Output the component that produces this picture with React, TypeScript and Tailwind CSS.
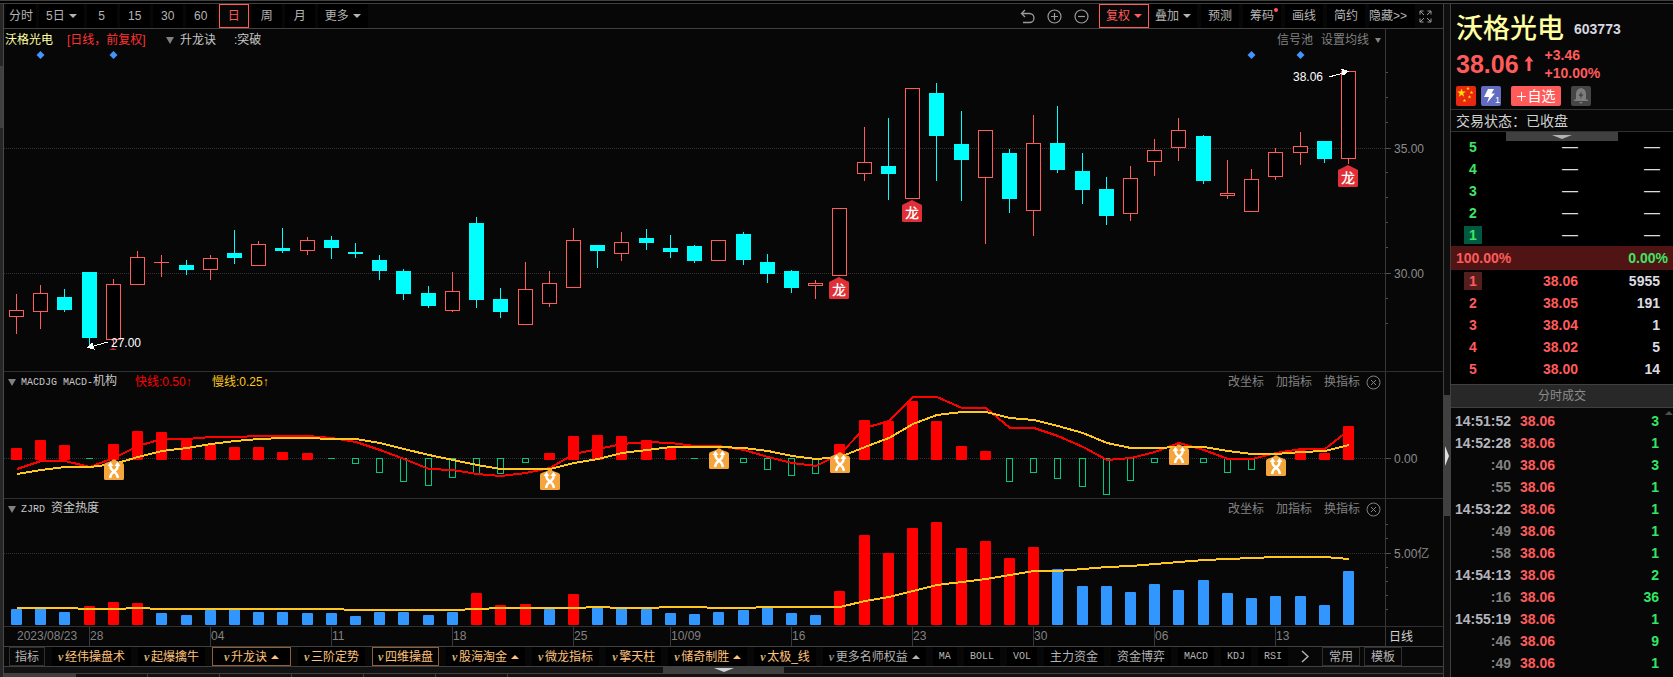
import { type ReactNode } from "react";
import clsx from "clsx";

/* ----------------------------------------------------------------
   Types
---------------------------------------------------------------- */
// [up, high, top, bottom, low]
type Candle = [number, number, number, number, number];

type Level = { level: number; price: string; volume: string };
type Tick = { time: string; price: string; volume: number };

type Tab = {
  label: string;
  master?: boolean;
  muted?: boolean;
  boxed?: boolean;
  arrow?: boolean;
};

/* ----------------------------------------------------------------
   Chart data
---------------------------------------------------------------- */
const candles: Candle[] = [
  [1, 294, 310, 317, 334],
  [1, 285, 293, 312, 329],
  [0, 289, 297, 310, 312],
  [0, 272, 272, 338, 348],
  [1, 279, 284, 340, 347],
  [1, 251, 257, 285, 285],
  [1, 255, 262, 263, 277],
  [0, 260, 265, 270, 275],
  [1, 255, 258, 270, 280],
  [0, 230, 253, 258, 264],
  [1, 241, 244, 266, 266],
  [0, 228, 248, 251, 253],
  [1, 237, 240, 251, 255],
  [0, 236, 240, 248, 259],
  [0, 243, 252, 254, 258],
  [0, 255, 260, 271, 280],
  [0, 269, 271, 294, 300],
  [0, 286, 293, 306, 308],
  [1, 272, 291, 311, 312],
  [0, 217, 223, 300, 308],
  [0, 288, 299, 312, 318],
  [1, 262, 289, 325, 325],
  [1, 271, 283, 304, 307],
  [1, 228, 240, 288, 288],
  [0, 245, 245, 251, 268],
  [1, 232, 242, 254, 261],
  [0, 229, 238, 243, 250],
  [0, 235, 248, 252, 258],
  [0, 245, 246, 261, 263],
  [1, 240, 240, 261, 261],
  [0, 232, 234, 260, 265],
  [0, 254, 262, 274, 283],
  [0, 270, 271, 288, 293],
  [1, 280, 283, 286, 299],
  [1, 208, 208, 276, 276],
  [1, 127, 162, 174, 181],
  [0, 118, 166, 174, 200],
  [1, 88, 88, 199, 199],
  [0, 83, 93, 136, 181],
  [0, 111, 144, 160, 201],
  [1, 130, 130, 178, 244],
  [0, 149, 153, 199, 213],
  [1, 115, 143, 211, 236],
  [0, 106, 143, 170, 173],
  [0, 153, 171, 190, 204],
  [0, 177, 189, 216, 225],
  [1, 166, 178, 214, 221],
  [1, 139, 150, 162, 176],
  [1, 118, 130, 148, 161],
  [0, 135, 136, 181, 184],
  [1, 160, 193, 196, 199],
  [1, 169, 179, 212, 212],
  [1, 148, 152, 177, 180],
  [1, 132, 146, 153, 165],
  [0, 141, 141, 159, 163],
  [1, 71, 71, 159, 164],
];

// bar end; values under the zero line (458) are drawn as hollow green bars
const macdBars = [
  448, 440, 445, 459, 444, 431, 432, 440, 444, 447, 447, 452, 453, 459, 464,
  473, 482, 486, 478, 474, 474, 463, 453, 436, 435, 436, 440, 448, 459, 0, 463,
  470, 476, 474, 444, 420, 421, 401, 421, 446, 451, 482, 473, 479, 487, 495,
  481, 463, 0, 463, 473, 470, 0, 450, 453, 426,
];

const fastLine = [
  469, 461, 461, 467, 458, 446, 439, 439, 437, 437, 436, 436, 436, 438, 442,
  450, 459, 469, 470, 474, 476, 473, 468, 454, 449, 444, 442, 443, 446, 446,
  450, 457, 463, 466, 454, 428, 421, 397, 397, 408, 408, 428, 428, 436, 447,
  460, 458, 452, 443, 450, 459, 459, 453, 449, 449, 430,
];

const slowLine = [
  474, 470, 467, 467, 464, 457, 451, 448, 444, 441, 439, 438, 438, 439, 439,
  443, 449, 455, 460, 465, 469, 469, 469, 463, 459, 453, 450, 447, 447, 447,
  448, 451, 456, 459, 457, 447, 438, 424, 415, 412, 412, 418, 420, 426, 433,
  443, 448, 448, 447, 447, 451, 454, 454, 452, 451, 445,
];

const heatBars = [
  609, 608, 612, 606, 602, 603, 613, 615, 610, 609, 612, 612, 613, 613, 616,
  612, 612, 615, 612, 593, 605, 604, 609, 594, 606, 608, 609, 613, 614, 612,
  610, 607, 613, 615, 591, 535, 553, 528, 522, 548, 541, 558, 547, 569, 586,
  586, 592, 584, 590, 580, 593, 598, 596, 596, 605, 571,
];

const hotDays = [3, 4, 5, 19, 20, 21, 23, 34, 35, 36, 37, 38, 39, 40, 41, 42];

const heatLine = [
  608, 608, 608, 609, 609, 608, 609, 609, 609, 609, 609, 609, 609, 609, 610,
  610, 610, 610, 610, 609, 608, 608, 608, 608, 607, 608, 608, 607, 607, 608,
  608, 607, 607, 607, 607, 601, 597, 591, 585, 582, 579, 575, 571, 571, 569,
  567, 566, 564, 562, 560, 559, 558, 557, 557, 557, 559,
];

const dragonMarks = [
  { day: 34, y: 277 },
  { day: 37, y: 200 },
  { day: 55, y: 165 },
];

const crossMarks = [
  { day: 4, y: 459 },
  { day: 22, y: 469 },
  { day: 29, y: 448 },
  { day: 34, y: 452 },
  { day: 48, y: 444 },
  { day: 52, y: 455 },
];

const dates = [
  { day: 3, label: "28" },
  { day: 8, label: "04" },
  { day: 13, label: "11" },
  { day: 18, label: "18" },
  { day: 23, label: "25" },
  { day: 27, label: "10/09" },
  { day: 32, label: "16" },
  { day: 37, label: "23" },
  { day: 42, label: "30" },
  { day: 47, label: "06" },
  { day: 52, label: "13" },
];

/* ----------------------------------------------------------------
   Quote data
---------------------------------------------------------------- */
const asks = [5, 4, 3, 2, 1];

const bids: Level[] = [
  { level: 1, price: "38.06", volume: "5955" },
  { level: 2, price: "38.05", volume: "191" },
  { level: 3, price: "38.04", volume: "1" },
  { level: 4, price: "38.02", volume: "5" },
  { level: 5, price: "38.00", volume: "14" },
];

const ticks: Tick[] = [
  { time: "14:51:52", price: "38.06", volume: 3 },
  { time: "14:52:28", price: "38.06", volume: 1 },
  { time: ":40", price: "38.06", volume: 3 },
  { time: ":55", price: "38.06", volume: 1 },
  { time: "14:53:22", price: "38.06", volume: 1 },
  { time: ":49", price: "38.06", volume: 1 },
  { time: ":58", price: "38.06", volume: 1 },
  { time: "14:54:13", price: "38.06", volume: 2 },
  { time: ":16", price: "38.06", volume: 36 },
  { time: "14:55:19", price: "38.06", volume: 1 },
  { time: ":46", price: "38.06", volume: 9 },
  { time: ":49", price: "38.06", volume: 1 },
];

const tabs: Tab[] = [
  { label: "经伟操盘术", master: true },
  { label: "起爆擒牛", master: true },
  { label: "升龙诀", master: true, boxed: true, arrow: true },
  { label: "三阶定势", master: true },
  { label: "四维操盘", master: true, boxed: true },
  { label: "股海淘金", master: true, arrow: true },
  { label: "微龙指标", master: true },
  { label: "擎天柱", master: true },
  { label: "储奇制胜", master: true, arrow: true },
  { label: "太极_线", master: true },
  { label: "更多名师权益", master: true, muted: true, arrow: true },
  { label: "MA" },
  { label: "BOLL" },
  { label: "VOL" },
  { label: "主力资金" },
  { label: "资金博弈" },
  { label: "MACD" },
  { label: "KDJ" },
  { label: "RSI" },
];

/* ----------------------------------------------------------------
   Helpers
---------------------------------------------------------------- */
const left = (day: number) => Math.round(9 + day * 24.218);
const center = (day: number) => left(day) + 7;
const toPoints = (ys: number[]) =>
  ys.map((y, day) => `${center(day) + 1},${y}`).join(" ");

function Caret({ up, className }: { up?: boolean; className?: string }) {
  return (
    <svg viewBox="0 0 8 4" className={clsx("h-1 w-2 shrink-0", className)} fill="currentColor">
      <path d={up ? "M4 0L8 4H0Z" : "M0 0H8L4 4Z"} />
    </svg>
  );
}

function Fold() {
  return (
    <svg viewBox="0 0 8 7" className="h-[7px] w-2 shrink-0 text-[#808080]" fill="currentColor">
      <path d="M0 0H8L4 7Z" />
    </svg>
  );
}

/* ----------------------------------------------------------------
   Toolbar
---------------------------------------------------------------- */
function Period({ children, active, wide }: { children: ReactNode; active?: boolean; wide?: boolean }) {
  return (
    <button
      className={clsx(
        "flex h-6 items-center justify-center gap-1",
        wide ? "px-[7px]" : "w-[30px]",
        active ? "border border-[#ff5b5b] text-[#ff5b5b]" : "bg-black"
      )}
    >
      {children}
    </button>
  );
}

function Tool({ children }: { children: ReactNode }) {
  return (
    <button className="relative flex h-6 items-center gap-1 bg-black px-[7px]">
      {children}
    </button>
  );
}

function Toolbar() {
  return (
    <header className="flex h-[25px] items-center justify-between border-b border-[#404040] pr-[11px] pl-[2px] text-[#b4b4b4]">
      <nav className="flex items-center gap-[3px]">
        <Period>分时</Period>
        <Period wide>
          5日
          <Caret />
        </Period>
        <Period>5</Period>
        <Period>15</Period>
        <Period>30</Period>
        <Period>60</Period>
        <Period active>日</Period>
        <Period>周</Period>
        <Period>月</Period>
        <Period wide>
          更多
          <Caret />
        </Period>
      </nav>

      <div className="flex items-center gap-1">
        <div className="mr-1.5 flex items-center gap-3 text-[#9a9a9a]">
          <button aria-label="撤销">
            <svg viewBox="0 0 15 15" className="size-[15px]" fill="none" stroke="currentColor" strokeWidth="1.3">
              <path d="M5 1L1.5 4.5L5 8M1.5 4.5H9.5A4.5 4.5 0 0 1 9.5 13.5H3" />
            </svg>
          </button>
          <button aria-label="放大">
            <svg viewBox="0 0 15 15" className="size-[15px]" fill="none" stroke="currentColor" strokeWidth="1.2">
              <circle cx="7.5" cy="7.5" r="6.5" />
              <path d="M4 7.5H11M7.5 4V11" />
            </svg>
          </button>
          <button aria-label="缩小">
            <svg viewBox="0 0 15 15" className="size-[15px]" fill="none" stroke="currentColor" strokeWidth="1.2">
              <circle cx="7.5" cy="7.5" r="6.5" />
              <path d="M4 7.5H11" />
            </svg>
          </button>
        </div>
        <div className="flex">
          <button className="flex h-6 items-center gap-1 border border-[#ff5b5b] px-1.5 text-[#ff5b5b]">
            复权
            <Caret />
          </button>
          <button className="flex h-6 items-center gap-1 bg-black px-1.5">
            叠加
            <Caret />
          </button>
        </div>
        <Tool>预测</Tool>
        <Tool>
          筹码
          <span className="absolute top-1 right-[3px] size-1 rounded-full bg-[#ff5b5b]" />
        </Tool>
        <Tool>画线</Tool>
        <Tool>简约</Tool>
        <button className="h-6 bg-black pr-2">隐藏&gt;&gt;</button>
        <button aria-label="全屏" className="text-[#9a9a9a]">
          <svg viewBox="0 0 13 13" className="size-[13px]" fill="none" stroke="currentColor">
            <path d="M1 4.5V1H4.5M1 1L5 5M8.500 1H12V4.500M12 1L8 5M1 8.500V12H4.500M1 12L5 8M12 8.500V12H8.500M12 12L8 8" />
          </svg>
        </button>
      </div>
    </header>
  );
}

/* ----------------------------------------------------------------
   Charts
---------------------------------------------------------------- */
function Grid({ y }: { y: number }) {
  return (
    <path
      d={`M4 ${y}.5H1385`}
      stroke="#333"
      strokeDasharray="1 1"
      shapeRendering="crispEdges"
    />
  );
}

function Curve({ ys, color }: { ys: number[]; color: string }) {
  return (
    <polyline
      points={toPoints(ys)}
      fill="none"
      stroke={color}
      strokeWidth="2"
      shapeRendering="crispEdges"
    />
  );
}

function PriceChart() {
  return (
    <svg viewBox="4 29 1381 342" preserveAspectRatio="none" className="h-[342px] min-w-0 flex-1" shapeRendering="crispEdges">
      <Grid y={148} />
      <Grid y={273} />

      {[1, 4, 51, 53].map((day) => (
        <path
          key={day}
          d={`M${center(day)}.5 51L${center(day) + 4}.5 55L${center(day)}.5 59L${center(day) - 4}.5 55Z`}
          fill="#4394ff"
          shapeRendering="auto"
        />
      ))}

      {candles.map(([up, high, top, bottom, low], day) => {
        const color = up ? "#ff5b5b" : "#00ffff";
        return (
          <g key={day}>
            <rect x={center(day)} y={high} width="1" height={low - high} fill={color} />
            <rect x={left(day)} y={top} width="15" height={bottom - top} fill={color} />
            {up === 1 && bottom - top > 2 && (
              <rect x={left(day) + 1} y={top + 1} width="13" height={bottom - top - 2} fill="#000" />
            )}
          </g>
        );
      })}

      {dragonMarks.map(({ day, y }) => (
        <g key={day} transform={`translate(${left(day) - 3} ${y})`} shapeRendering="auto">
          <path d="M10 0L20 5V20.500Q20 22 18.500 22H1.500Q0 22 0 20.500V5Z" fill="#e12f37" />
          <text x="10" y="18" textAnchor="middle" fontSize="14" fontWeight="500" fill="#fff">
            龙
          </text>
        </g>
      ))}

      <path d="M113 348L117 350H109Z" fill="#c03038" shapeRendering="auto" />

      {/* low / high callouts */}
      <g stroke="#fff" fill="#fff">
        <path d="M108 342L90 347" />
        <path d="M88 347.500L92 343.500L94 349Z" />
        <path d="M1329 77L1345 72.500" />
        <path d="M1348 71.500L1342 69.500L1343 75Z" />
      </g>
      <text x="111" y="347" fontSize="12" fill="#fff">
        27.00
      </text>
      <text x="1293" y="81" fontSize="12" fill="#fff">
        38.06
      </text>
    </svg>
  );
}

function MacdChart() {
  return (
    <svg viewBox="4 372 1381 126" preserveAspectRatio="none" className="h-[126px] min-w-0 flex-1">
      <Grid y={458} />

      {macdBars.map((y, day) => {
        if (!y) return null;
        if (y < 458) {
          return <rect key={day} x={left(day) + 2} y={y} width="11" height={460 - y} rx="1" fill="#f00" />;
        }
        return y === 459 ? (
          <rect key={day} x={left(day) + 4} y="458" width="7" height="1" fill="#00c882" />
        ) : (
          <rect
            key={day}
            x={left(day) + 4.5}
            y="458.5"
            width="6"
            height={y - 459}
            fill="none"
            stroke="#00c882"
          />
        );
      })}

      <Curve ys={fastLine} color="#f00" />
      <Curve ys={slowLine} color="#ffc81e" />

      {crossMarks.map(({ day, y }) => (
        <g key={day} transform={`translate(${left(day) - 2} ${y})`}>
          <path d="M7 2Q10 -1.500 13 2L18.500 4Q20 4.500 20 6V19.500Q20 21 18.500 21H1.500Q0 21 0 19.500V6Q0 4.500 1.500 4Z" fill="#f4a63c" />
          <path
            d="M6.500 6V8Q6.500 10 10 12.500Q13.500 15 14 19M13.500 6V8Q13.500 10 10 12.500Q6.500 15 6 19"
            fill="none"
            stroke="#fff"
            strokeWidth="2.400"
          />
          <path d="M3.500 7L6.500 2.800L9.500 7ZM10.500 7L13.500 2.800L16.500 7Z" fill="#fff" />
        </g>
      ))}
    </svg>
  );
}

function HeatChart() {
  return (
    <svg viewBox="4 499 1381 127" preserveAspectRatio="none" className="h-[127px] min-w-0 flex-1">
      <Grid y={553} />
      {heatBars.map((y, day) => (
        <rect
          key={day}
          x={left(day) + 2}
          y={y}
          width="11"
          height={625 - y}
          rx="1"
          fill={hotDays.includes(day) ? "#f00" : "#3296ff"}
        />
      ))}
      <Curve ys={heatLine} color="#ffc81e" />
    </svg>
  );
}

type AxisMark = { y: number; label?: string };

function Axis({ top, height, marks }: { top: number; height: number; marks: AxisMark[] }) {
  return (
    <svg viewBox={`0 ${top} 58 ${height}`} width="58" height={height} className="shrink-0" fontSize="12">
      <path d={`M0.500 ${top}V${top + height}`} stroke="#383838" />
      {marks.map(({ y, label }) => (
        <g key={y}>
          <path d={`M1 ${y}.5H${label ? 6 : 3}`} stroke="#505050" />
          {label && (
            <text x="9" y={y + 5} fill="#8c8c8c">
              {label}
            </text>
          )}
        </g>
      ))}
    </svg>
  );
}

function IndicatorActions() {
  return (
    <div className="ml-auto flex items-center gap-3 text-[#828282]">
      <button>改坐标</button>
      <button>加指标</button>
      <button>换指标</button>
      <button aria-label="关闭" className="-ml-1.5">
        <svg viewBox="0 0 15 15" className="size-[15px]" fill="none" stroke="currentColor">
          <circle cx="7.500" cy="7.500" r="6.500" />
          <path d="M5 5L10 10M10 5L5 10" />
        </svg>
      </button>
    </div>
  );
}

function PricePanel() {
  return (
    <section className="relative flex border-b border-[#303030]">
      <PriceChart />
      <Axis
        top={29}
        height={342}
        marks={[
          { y: 72 },
          { y: 97 },
          { y: 122 },
          { y: 148, label: "35.00" },
          { y: 172 },
          { y: 197 },
          { y: 222 },
          { y: 247 },
          { y: 273, label: "30.00" },
          { y: 298 },
          { y: 323 },
        ]}
      />
      <div className="absolute inset-x-0 top-0 flex h-[22px] items-center pr-[62px] pl-px text-[#c8c8c8]">
        <span className="w-[62px] text-[#ffffa0]">沃格光电</span>
        <span className="w-[99px] text-[#ff3232]">[日线，前复权]</span>
        <Fold />
        <span className="ml-1.5 w-[54px]">升龙诀</span>
        <span>:突破</span>
        <div className="ml-auto flex items-center gap-2 text-[#828282]">
          <button>信号池</button>
          <button className="flex items-center gap-1.5">
            设置均线
            <svg viewBox="0 0 6 5" className="h-[5px] w-1.5" fill="currentColor">
              <path d="M0 0H6L3 5Z" />
            </svg>
          </button>
        </div>
      </div>
    </section>
  );
}

function MacdPanel() {
  return (
    <section className="relative flex border-b border-[#303030]">
      <MacdChart />
      <Axis top={372} height={126} marks={[{ y: 458, label: "0.00" }]} />
      <div className="absolute inset-x-0 top-0 flex h-5 items-center pr-[62px] pl-1 text-[#c8c8c8]">
        <Fold />
        <h2 className="ml-[5px] w-[114px]">
          <span className="font-['Liberation_Mono',monospace] text-[10px]">MACDJG MACD-</span>
          机构
        </h2>
        <span className="w-[77px] text-[#ff0000]">快线:0.50↑</span>
        <span className="text-[#ffc81e]">慢线:0.25↑</span>
        <IndicatorActions />
      </div>
    </section>
  );
}

function HeatPanel() {
  return (
    <section className="relative flex border-b border-[#303030]">
      <HeatChart />
      <Axis
        top={499}
        height={127}
        marks={[
          { y: 524 },
          { y: 538 },
          { y: 553, label: "5.00亿" },
          { y: 567 },
          { y: 581 },
          { y: 595 },
          { y: 609 },
        ]}
      />
      <div className="absolute inset-x-0 top-0 flex h-5 items-center pr-[62px] pl-1 text-[#c8c8c8]">
        <Fold />
        <h2 className="ml-[5px]">
          <span className="font-['Liberation_Mono',monospace] text-[10px]">ZJRD </span>
          资金热度
        </h2>
        <IndicatorActions />
      </div>
    </section>
  );
}

function DateAxis() {
  return (
    <div className="flex border-b border-[#404040]">
      <svg viewBox="4 627 1381 19" preserveAspectRatio="none" className="h-[19px] min-w-0 flex-1" fontSize="12" fill="#828282">
        <text x="17" y="640">
          2023/08/23
        </text>
        {dates.map(({ day, label }) => (
          <g key={day}>
            <path d={`M${center(day)}.5 627V646`} stroke="#383838" />
            <text x={center(day) + 1} y="640">
              {label}
            </text>
          </g>
        ))}
      </svg>
      <span className="flex w-[58px] items-center border-l border-[#383838] pl-[3px] text-[#d2d2d2]">日线</span>
    </div>
  );
}

/* ----------------------------------------------------------------
   Indicator tabs
---------------------------------------------------------------- */
function IndicatorTabs() {
  return (
    <nav className="flex h-5 items-stretch gap-[7px] border-b border-[#404040] pl-[5px] whitespace-nowrap text-[#b4b4b4]">
      <button className="border border-[#303030] px-[5px]">指标</button>
      {tabs.map(({ label, master, muted, boxed, arrow }) => (
        <button
          key={label}
          className={clsx(
            "flex items-center bg-black",
            !boxed && "px-1.5",
            boxed && (arrow ? "px-[11px]" : "px-[5px]"),
            boxed && "border border-[#8c5f37]",
            master && !muted && "text-[#ffc37d]",
            !master && /^[A-Z]+$/.test(label) && "font-['Liberation_Mono',monospace] text-[10px]"
          )}
        >
          {master && (
            <span
              className={clsx(
                "w-[7px] text-left font-['Liberation_Serif',serif] font-bold italic",
                muted ? "text-[#8c8c8c]" : "text-[#d2b46e]"
              )}
            >
              v
            </span>
          )}
          {label}
          {arrow && <Caret up className="ml-1" />}
        </button>
      ))}
      <button aria-label="更多指标" className="px-1.5">
        <svg viewBox="0 0 8 13" className="h-[13px] w-2" fill="none" stroke="currentColor" strokeWidth="1.500">
          <path d="M1 1L7 6.500L1 12" />
        </svg>
      </button>
      <div className="flex gap-1">
        <button className="border border-[#303030] px-1.5">常用</button>
        <button className="border border-[#303030] px-1.5">模板</button>
      </div>
    </nav>
  );
}

/* ----------------------------------------------------------------
   Quote sidebar
---------------------------------------------------------------- */
const star =
  "M0 -1L.24 -.32L.95 -.31L.38 .12L.59 .81L0 .4L-.59 .81L-.38 .12L-.95 -.31L-.24 -.32Z";

function QuoteHeader() {
  return (
    <div className="border-b border-[#303030] pt-2 pb-[3px] pl-[5px]">
      <div className="flex h-[34px] items-center gap-2.5">
        <h1 className="text-[27px] leading-none font-medium text-[#ffffa0]">沃格光电</h1>
        <span className="text-[14px] font-bold text-[#d8d8e0]">603773</span>
      </div>
      <div className="flex h-9 items-center font-bold text-[#ff5b5b]">
        <span className="text-[25px] leading-none">38.06</span>
        <svg viewBox="0 0 10 16" className="mx-[5px] h-4 w-2.5" fill="currentColor">
          <path d="M5 0L9.500 5.500H6.500V15H3.500V5.500H.5Z" />
        </svg>
        <div className="ml-1.5 text-[14px] leading-[18px]">
          <div>+3.46</div>
          <div>+10.00%</div>
        </div>
      </div>
      <div className="mt-1 flex h-5 items-center gap-[5px]">
        <svg viewBox="0 0 20 20" className="size-5">
          <rect width="20" height="20" rx="2" fill="#e8290f" />
          <g fill="#ffe400">
            <path transform="translate(5.500 7) scale(4.500)" d={star} />
            <path transform="translate(12 2.500) scale(1.900)" d={star} />
            <path transform="translate(15.500 6.500) scale(1.900)" d={star} />
            <path transform="translate(13.500 11) scale(1.900)" d={star} />
            <path transform="translate(8.500 14.500) scale(1.900)" d={star} />
          </g>
        </svg>
        <svg viewBox="0 0 20 20" className="size-5">
          <rect width="20" height="20" rx="2" fill="#626cc0" />
          <path d="M7 3H13L10.500 7.500H14L6 17L8 11H3Z" fill="#fff" />
          <text x="14" y="17" fontSize="9" fill="#fff">
            1
          </text>
        </svg>
        <button className="ml-[5px] flex h-5 w-[50px] items-center justify-center gap-0.5 rounded-xs bg-[#ff5b5b] text-[14px] text-white">
          <svg viewBox="0 0 9 9" className="size-[9px]" stroke="currentColor">
            <path d="M0 4.500H9M4.500 0V9" />
          </svg>
          自选
        </button>
        <button aria-label="预警" className="ml-[5px]">
          <svg viewBox="0 0 20 20" className="size-5">
            <rect width="20" height="20" rx="2" fill="#464646" />
            <path d="M10 2Q15 3 15 8V13.500H17V15H3V13.500H5V8Q5 3 10 2ZM8 16H12L10 18Z" fill="#7d7d7d" />
            <path d="M10.500 5.500L7.500 10H9.500L9 13L12.500 8.500H10.500Z" fill="#464646" />
          </svg>
        </button>
      </div>
    </div>
  );
}

function OrderBook() {
  return (
    <div className="relative bg-black pt-1 pb-1 text-[14px] font-bold">
      <table className="w-full table-fixed">
        <tbody>
          {asks.map((level) => (
            <tr key={level} className="h-[22px]">
              <td className="w-[44px] pl-[13px]">
                <span className={clsx("block w-[18px] text-center leading-[18px] text-[#3ce664]", level === 1 && "bg-[#005a41]")}>
                  {level}
                </span>
              </td>
              <td className="w-[83px] text-right font-normal text-[#dcdcdc]">
                <span className="text-[16px] leading-none">—</span>
              </td>
              <td className="pr-[13px] text-right font-normal text-[#dcdcdc]">
                <span className="text-[16px] leading-none">—</span>
              </td>
            </tr>
          ))}
        </tbody>
      </table>

      <div className="flex h-6 items-center justify-between bg-[#501414] pr-[5px] pl-[5px]">
        <span className="text-[#ff5b5b]">100.00%</span>
        <span className="text-[#3ce664]">0.00%</span>
      </div>

      <table className="w-full table-fixed">
        <tbody>
          {bids.map(({ level, price, volume }) => (
            <tr key={level} className="h-[22px]">
              <td className="w-[44px] pl-[13px]">
                <span className={clsx("block w-[18px] text-center leading-[18px] text-[#ff5b5b]", level === 1 && "bg-[#551e1e]")}>
                  {level}
                </span>
              </td>
              <td className="w-[83px] text-right text-[#ff5b5b]">{price}</td>
              <td className="pr-[13px] text-right text-[#dcdce0]">{volume}</td>
            </tr>
          ))}
        </tbody>
      </table>

      {/* pull-down handle */}
      <div className="absolute top-0 left-[55px] flex h-[9px] w-28 items-center justify-center bg-[#404040] text-[#b4b4b4]">
        <svg viewBox="0 0 20 4" className="h-1 w-5" fill="currentColor">
          <path d="M0 0H20L10 4Z" />
        </svg>
      </div>
    </div>
  );
}

function TickList() {
  return (
    <section>
      <h2 className="flex h-6 items-center justify-center border-y border-[#404040] bg-[#282828] text-[#8c8c8c]">
        分时成交
      </h2>
      <div className="relative pt-[2px] text-[14px] font-bold">
        <table className="w-full table-fixed">
          <tbody>
            {ticks.map(({ time, price, volume }, i) => (
              <tr key={i} className="h-[22px]">
                <td className={clsx("w-[60px] text-right", time.startsWith(":") ? "text-[#828282]" : "text-[#b4b4bc]")}>
                  {time}
                </td>
                <td className="w-[60px] pl-[9px] text-[#ff5b5b]">{price}</td>
                <td className="pr-[14px] text-right text-[#32e664]">{volume}</td>
              </tr>
            ))}
          </tbody>
        </table>
        <Caret up className="absolute top-[3px] right-0 text-[#505050]" />
      </div>
    </section>
  );
}

/* ----------------------------------------------------------------
   Page
---------------------------------------------------------------- */
export default function App() {
  return (
    <div className="flex min-h-screen flex-col bg-[#070707] font-['Liberation_Sans','Noto_Sans_CJK_SC',sans-serif] text-[12px] leading-4">
      <div className="h-[3px] border-t border-[#404040] bg-black" />
      <div className="flex flex-1 border-t border-[#404040]">
        <div className="w-1 shrink-0 border-r border-[#484848] bg-[#262626] pt-[62px]">
          <div className="h-[62px] bg-[#404040]" />
        </div>

        <main className="flex min-w-0 flex-1 flex-col">
          <Toolbar />
          <PricePanel />
          <MacdPanel />
          <HeatPanel />
          <DateAxis />
          <IndicatorTabs />
          <div className="flex h-[7px] justify-center border-b border-[#404040] bg-[#121212]">
            <div className="flex w-[121px] justify-center bg-[#404040] pt-px text-[#d2d2d2]">
              <svg viewBox="0 0 20 4" className="h-1 w-5" fill="currentColor">
                <path d="M0 0H20L10 4Z" />
              </svg>
            </div>
          </div>
          <div className="flex flex-1 bg-[#121212]">
            <div className="w-[72px] bg-[#404040]" />
            {[0, 1, 2, 3, 4, 5].map((n) => (
              <div key={n} className="w-[72px] border-r border-[#404040]" />
            ))}
          </div>
        </main>

        <div className="flex w-2 shrink-0 flex-col border-x border-[#404040] bg-[#0f0f0f] pt-[391px]">
          <div className="flex h-[121px] items-center bg-[#404040] text-[#e0e0e0]">
            <svg viewBox="0 0 4 20" className="ml-px h-5 w-1" fill="currentColor">
              <path d="M0 0L4 10L0 20Z" />
            </svg>
          </div>
        </div>

        <aside className="w-[222px] shrink-0">
          <QuoteHeader />
          <div className="flex h-[22px] items-center border-b border-[#303030] pl-[5px] text-[14px] text-[#d2d2d2]">
            交易状态：已收盘
          </div>
          <OrderBook />
          <TickList />
        </aside>
      </div>
    </div>
  );
}
